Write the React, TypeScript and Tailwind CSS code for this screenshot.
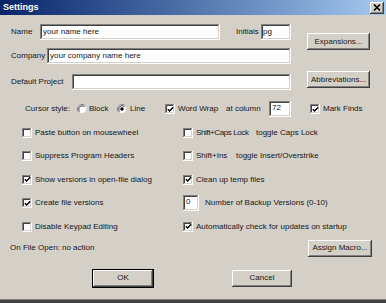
import React from "react";

const sunken =
  "bg-white shadow-[inset_-1px_-1px_#ffffff,inset_1px_1px_#808080,inset_-2px_-2px_#d4d0c8,inset_2px_2px_#404040]";
const raised =
  "bg-[#d4d0c8] shadow-[inset_-1px_-1px_#404040,inset_1px_1px_#ffffff,inset_-2px_-2px_#808080]";

function Check({ checked }: { checked?: boolean }) {
  return (
    <span className={`w-[10px] h-[10px] shrink-0 flex items-center justify-center ${sunken}`}>
      {checked && (
        <svg width="7" height="7" viewBox="0 0 7 7">
          <path d="M0.8 3.2 L2.6 5 L6.2 1.2" stroke="#000" strokeWidth="1.4" fill="none" />
        </svg>
      )}
    </span>
  );
}

function Radio({ on }: { on?: boolean }) {
  return (
    <svg width="10" height="10" viewBox="0 0 10 10" className="shrink-0">
      <circle cx="5" cy="5" r="4.5" fill="#ffffff" />
      <path d="M1.8 8.2 A4.5 4.5 0 0 1 8.2 1.8" stroke="#808080" strokeWidth="1" fill="none" />
      <path d="M2.6 7.4 A3.4 3.4 0 0 1 7.4 2.6" stroke="#404040" strokeWidth="1" fill="none" />
      <path d="M8.2 1.8 A4.5 4.5 0 0 1 1.8 8.2" stroke="#d4d0c8" strokeWidth="1" fill="none" />
      {on && <circle cx="5" cy="5" r="1.8" fill="#000" />}
    </svg>
  );
}

function Btn({ label, w, def }: { label: string; w: string; def?: boolean }) {
  return (
    <div
      className={`${w} h-[17px] flex items-center justify-center ${raised} ${
        def ? "outline outline-1 outline-[#000]" : ""
      }`}
    >
      {label}
    </div>
  );
}

function CheckItem({ checked, children }: { checked?: boolean; children: React.ReactNode }) {
  return (
    <div className="flex items-center gap-[3px] whitespace-nowrap">
      <Check checked={checked} />
      {children}
    </div>
  );
}

export default function App() {
  return (
    <div className="w-[386px] h-[303px] bg-[#d4d0c8] font-['Liberation_Sans',Arial,sans-serif] text-[8px] leading-none text-[#161616] flex flex-col overflow-hidden">
      {/* Title bar */}
      <div className="h-[15px] shrink-0 bg-linear-to-r from-[#0a246a] to-[#a6caf0] flex items-center justify-between pl-[3px] pr-[2px]">
        <span className="text-white font-bold text-[9px]">Settings</span>
        <div className={`w-[14px] h-[12px] flex items-center justify-center ${raised}`}>
          <svg width="8" height="7" viewBox="0 0 8 7">
            <path d="M1 0.5 L7 6.5 M7 0.5 L1 6.5" stroke="#000" strokeWidth="1.6" />
          </svg>
        </div>
      </div>

      {/* Top fields */}
      <div className="flex">
        <div className="pl-[11px] flex flex-col">
          <div className="mt-[9px] h-[16px] flex items-center">
            <span className="w-[29px]">Name</span>
            <div className={`w-[180px] h-[16px] flex items-center px-[3px] ${sunken}`}>your name here</div>
            <span className="ml-[16px] w-[25px]">Initials</span>
            <div className={`w-[30px] h-[16px] flex items-center px-[2px] ${sunken}`}>pg</div>
          </div>
          <div className="mt-[8px] h-[16px] flex items-center">
            <span className="w-[36px]">Company</span>
            <div className={`w-[244px] h-[16px] flex items-center px-[3px] ${sunken}`}>your company name here</div>
          </div>
          <div className="mt-[10px] h-[16px] flex items-center">
            <span className="w-[61px]">Default Project</span>
            <div className={`w-[219px] h-[16px] ${sunken}`} />
          </div>
        </div>
        <div className="ml-[16px] flex flex-col">
          <div className="mt-[18px]">
            <Btn label="Expansions..." w="w-[63px]" />
          </div>
          <div className="mt-[21px]">
            <Btn label="Abbreviations..." w="w-[63px]" />
          </div>
        </div>
      </div>

      {/* Cursor style row */}
      <div className="mt-[11px] h-[16px] flex items-center pl-[25px] whitespace-nowrap">
        <span className="w-[52px]">Cursor style:</span>
        <div className="w-[40px] flex items-center gap-[2px]">
          <Radio />
          <span>Block</span>
        </div>
        <div className="w-[48px] flex items-center gap-[3px]">
          <Radio on />
          <span>Line</span>
        </div>
        <div className="w-[61px]">
          <CheckItem checked>Word Wrap</CheckItem>
        </div>
        <span className="w-[43px]">at column</span>
        <div className={`w-[22px] h-[16px] pt-[3px] px-[3px] ${sunken}`}>72</div>
        <div className="ml-[19px]">
          <CheckItem checked>Mark Finds</CheckItem>
        </div>
      </div>

      {/* Checkbox grid */}
      <div className="mt-[4px] pl-[22px] grid grid-cols-[161px_1fr] auto-rows-[23.5px]">
        <CheckItem>Paste button on mousewheel</CheckItem>
        <CheckItem>
          <span className="w-[57px] tracking-[-0.4px]">Shift+Caps Lock</span>
          <span>toggle Caps Lock</span>
        </CheckItem>
        <CheckItem>Suppress Program Headers</CheckItem>
        <CheckItem>
          <span className="w-[37px]">Shift+Ins</span>
          <span>toggle Insert/Overstrike</span>
        </CheckItem>
        <CheckItem checked>Show versions in open-file dialog</CheckItem>
        <CheckItem checked>Clean up temp files</CheckItem>
        <CheckItem checked>Create file versions</CheckItem>
        <div className="flex items-center whitespace-nowrap">
          <div className={`w-[16px] h-[16px] pt-[3px] px-[3px] ${sunken}`}>0</div>
          <span className="ml-[6px]">Number of Backup Versions (0-10)</span>
        </div>
        <CheckItem>Disable Keypad Editing</CheckItem>
        <CheckItem checked>Automatically check for updates on startup</CheckItem>
      </div>

      {/* On file open */}
      <div className="mt-[1px] h-[17px] flex items-center justify-between pl-[10px] pr-[14px]">
        <div className="flex items-center whitespace-nowrap">
          <span className="w-[52px]">On File Open:</span>
          <span>no action</span>
        </div>
        <Btn label="Assign Macro..." w="w-[64px]" />
      </div>

      {/* OK / Cancel */}
      <div className="mt-[13px] flex pl-[93px]">
        <Btn label="OK" w="w-[60px]" def />
        <div className="ml-[79px]">
          <Btn label="Cancel" w="w-[60px]" />
        </div>
      </div>

      <div className="flex-1" />
      <div className="h-[1px] bg-[#808080] shrink-0" />
      <div className="h-[3px] bg-[#404040] shrink-0" />
    </div>
  );
}
